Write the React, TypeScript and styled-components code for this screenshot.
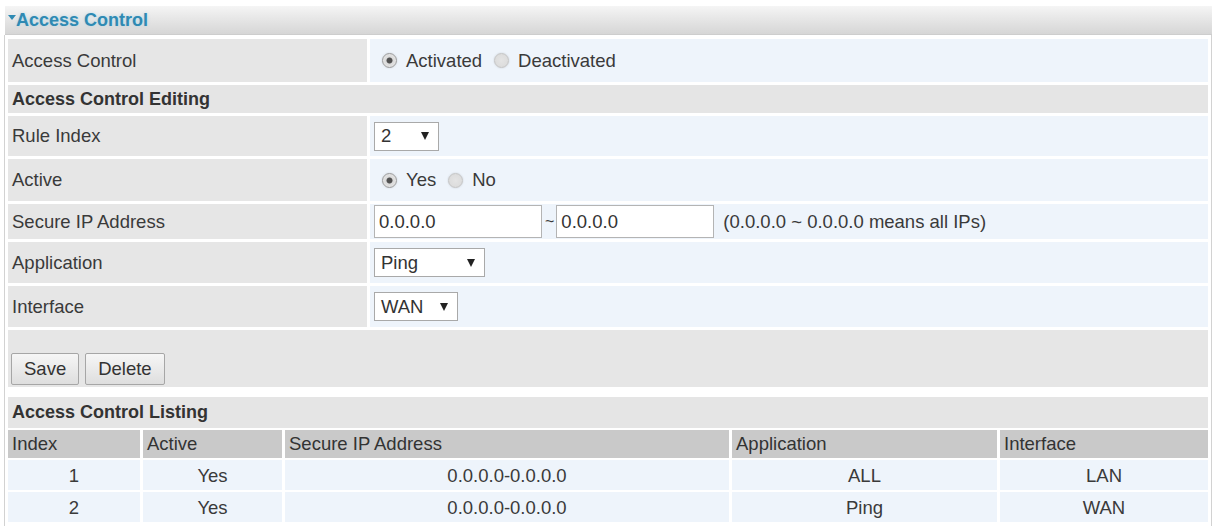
import React from "react";
import styled, { createGlobalStyle } from "styled-components";

const Global = createGlobalStyle`
  html, body { margin: 0; padding: 0; background: #ffffff; }
  body { font-family: "Liberation Sans", Arial, sans-serif; color: #333; }
`;

const Page = styled.div`
  width: 1217px;
  box-sizing: border-box;
  padding: 6px 5px 0 4px;
`;

const TitleBar = styled.div`
  margin-left: 1px;
  height: 29px;
  box-sizing: border-box;
  display: flex;
  align-items: center;
  padding-left: 3px;
  background: linear-gradient(#f5f5f5, #e2e2e2 60%, #d6d6d6);
  border-bottom: 1px solid #cdcdcd;
  font-size: 18px;
  font-weight: bold;
  color: #2f8ab3;
  text-shadow: 0 0 3px rgba(150, 210, 235, 0.6);
`;

const Caret = styled.span`
  display: inline-block;
  width: 0;
  height: 0;
  border-left: 4px solid transparent;
  border-right: 4px solid transparent;
  border-top: 5px solid #2f8ab3;
  margin: 0 0 6px 0;
`;

const Frame = styled.div`
  width: 1208px;
  box-sizing: border-box;
  border-left: 1px solid #d2d2d2;
  border-right: 1px solid #d2d2d2;
  padding: 4px 3px 4px 3px;
  display: flex;
  flex-direction: column;
`;

const FormGrid = styled.div`
  display: grid;
  grid-template-columns: 359px 1fr;
  gap: 3px;
`;

const Label = styled.div<{ $h: number }>`
  height: ${(p) => p.$h}px;
  background: #e6e6e6;
  display: flex;
  align-items: center;
  padding-left: 4px;
  font-size: 18.5px;
  color: #3a3a3a;
`;

const Value = styled.div<{ $h: number }>`
  height: ${(p) => p.$h}px;
  background: #eef4fb;
  display: flex;
  align-items: center;
  padding-left: 4px;
  font-size: 18.5px;
  color: #3a3a3a;
`;

const SectionHeader = styled.div<{ $h: number }>`
  grid-column: 1 / -1;
  height: ${(p) => p.$h}px;
  background: #e5e5e5;
  display: flex;
  align-items: center;
  padding-left: 4px;
  font-size: 18px;
  font-weight: bold;
  color: #333;
`;

const RadioGroup = styled.label`
  display: inline-flex;
  align-items: center;
`;

const RadioDot = styled.span<{ $on?: boolean; $first?: boolean }>`
  display: inline-block;
  box-sizing: border-box;
  width: 15px;
  height: 15px;
  border-radius: 50%;
  margin-left: ${(p) => (p.$first ? 8 : 12)}px;
  margin-right: 9px;
  border: 1px solid ${(p) => (p.$on ? "#9a9a9a" : "#c4c4c4")};
  background: ${(p) =>
    p.$on
      ? "radial-gradient(circle, #505050 0 2.6px, #d9d9d9 3.4px, #ececec 100%)"
      : "radial-gradient(circle, #e4e4e4 0, #d9d9d9 100%)"};
  box-shadow: 0 0 2px rgba(0, 0, 0, 0.15);
`;

const Select = styled.div<{ $w: number }>`
  width: ${(p) => p.$w}px;
  height: 29px;
  box-sizing: border-box;
  border: 1px solid #a9a9a9;
  background: #fff;
  display: flex;
  align-items: center;
  justify-content: space-between;
  padding: 0 9px 0 6px;
  font-size: 18.5px;
  color: #333;
`;

const Arrow = styled.span`
  display: inline-block;
  width: 0;
  height: 0;
  border-left: 4px solid transparent;
  border-right: 4px solid transparent;
  border-top: 8px solid #222;
`;

const TextBox = styled.div<{ $w: number }>`
  width: ${(p) => p.$w}px;
  height: 33px;
  box-sizing: border-box;
  border: 1px solid #b4b4b4;
  background: #fff;
  display: flex;
  align-items: center;
  padding-left: 4px;
  font-size: 18.5px;
  color: #333;
`;

const Tilde = styled.span`
  margin: 0 2px 0 3px;
  font-size: 16px;
`;

const Note = styled.span`
  margin-left: 9px;
  font-size: 18.5px;
`;

const ButtonBar = styled.div`
  margin-top: 3px;
  height: 57px;
  box-sizing: border-box;
  background: #e6e6e6;
  display: flex;
  align-items: flex-end;
  gap: 6px;
  padding: 0 0 2px 3px;
`;

const Button = styled.button`
  height: 32px;
  box-sizing: border-box;
  padding: 0 12px;
  border: 1px solid #a6a6a6;
  border-radius: 2px;
  background: linear-gradient(#f6f6f6, #dedede);
  font-family: "Liberation Sans", Arial, sans-serif;
  font-size: 18.5px;
  color: #333;
`;

const ListingHeader = styled.div`
  margin-top: 10px;
  height: 31px;
  background: #e5e5e5;
  display: flex;
  align-items: center;
  padding-left: 4px;
  font-size: 18px;
  font-weight: bold;
  color: #333;
`;

const ListTable = styled.div`
  margin-top: 2px;
  display: grid;
  grid-template-columns: 132px 139px 444px 265px 1fr;
  column-gap: 3px;
  row-gap: 2px;
`;

const HeadCell = styled.div`
  height: 28px;
  background: #c9c9c9;
  display: flex;
  align-items: center;
  padding-left: 4px;
  font-size: 18.5px;
  color: #333;
`;

const DataCell = styled.div`
  height: 30px;
  background: #eef4fb;
  display: flex;
  align-items: center;
  justify-content: center;
  padding-top: 2px;
  box-sizing: border-box;
  font-size: 18.5px;
  color: #3a3a3a;
`;

const rows = [
  { index: "1", active: "Yes", ip: "0.0.0.0-0.0.0.0", app: "ALL", iface: "LAN" },
  { index: "2", active: "Yes", ip: "0.0.0.0-0.0.0.0", app: "Ping", iface: "WAN" },
];

export default function App() {
  return (
    <>
      <Global />
      <Page>
        <TitleBar>
          <Caret />
          Access Control
        </TitleBar>
        <Frame>
          <FormGrid>
            <Label $h={43}>Access Control</Label>
            <Value $h={43}>
              <RadioGroup>
                <RadioDot $on $first />
                Activated
              </RadioGroup>
              <RadioGroup>
                <RadioDot />
                Deactivated
              </RadioGroup>
            </Value>
            <SectionHeader $h={28}>Access Control Editing</SectionHeader>
            <Label $h={40}>Rule Index</Label>
            <Value $h={40}>
              <Select $w={65}>
                2<Arrow />
              </Select>
            </Value>
            <Label $h={42}>Active</Label>
            <Value $h={42}>
              <RadioGroup>
                <RadioDot $on $first />
                Yes
              </RadioGroup>
              <RadioGroup>
                <RadioDot />
                No
              </RadioGroup>
            </Value>
            <Label $h={35}>Secure IP Address</Label>
            <Value $h={35}>
              <TextBox $w={168}>0.0.0.0</TextBox>
              <Tilde>~</Tilde>
              <TextBox $w={158}>0.0.0.0</TextBox>
              <Note>(0.0.0.0 ~ 0.0.0.0 means all IPs)</Note>
            </Value>
            <Label $h={41}>Application</Label>
            <Value $h={41}>
              <Select $w={111}>
                Ping
                <Arrow />
              </Select>
            </Value>
            <Label $h={41}>Interface</Label>
            <Value $h={41}>
              <Select $w={84}>
                WAN
                <Arrow />
              </Select>
            </Value>
          </FormGrid>
          <ButtonBar>
            <Button>Save</Button>
            <Button>Delete</Button>
          </ButtonBar>
          <ListingHeader>Access Control Listing</ListingHeader>
          <ListTable>
            <HeadCell>Index</HeadCell>
            <HeadCell>Active</HeadCell>
            <HeadCell>Secure IP Address</HeadCell>
            <HeadCell>Application</HeadCell>
            <HeadCell>Interface</HeadCell>
            {rows.map((r) => (
              <React.Fragment key={r.index}>
                <DataCell>{r.index}</DataCell>
                <DataCell>{r.active}</DataCell>
                <DataCell>{r.ip}</DataCell>
                <DataCell>{r.app}</DataCell>
                <DataCell>{r.iface}</DataCell>
              </React.Fragment>
            ))}
          </ListTable>
        </Frame>
      </Page>
    </>
  );
}
